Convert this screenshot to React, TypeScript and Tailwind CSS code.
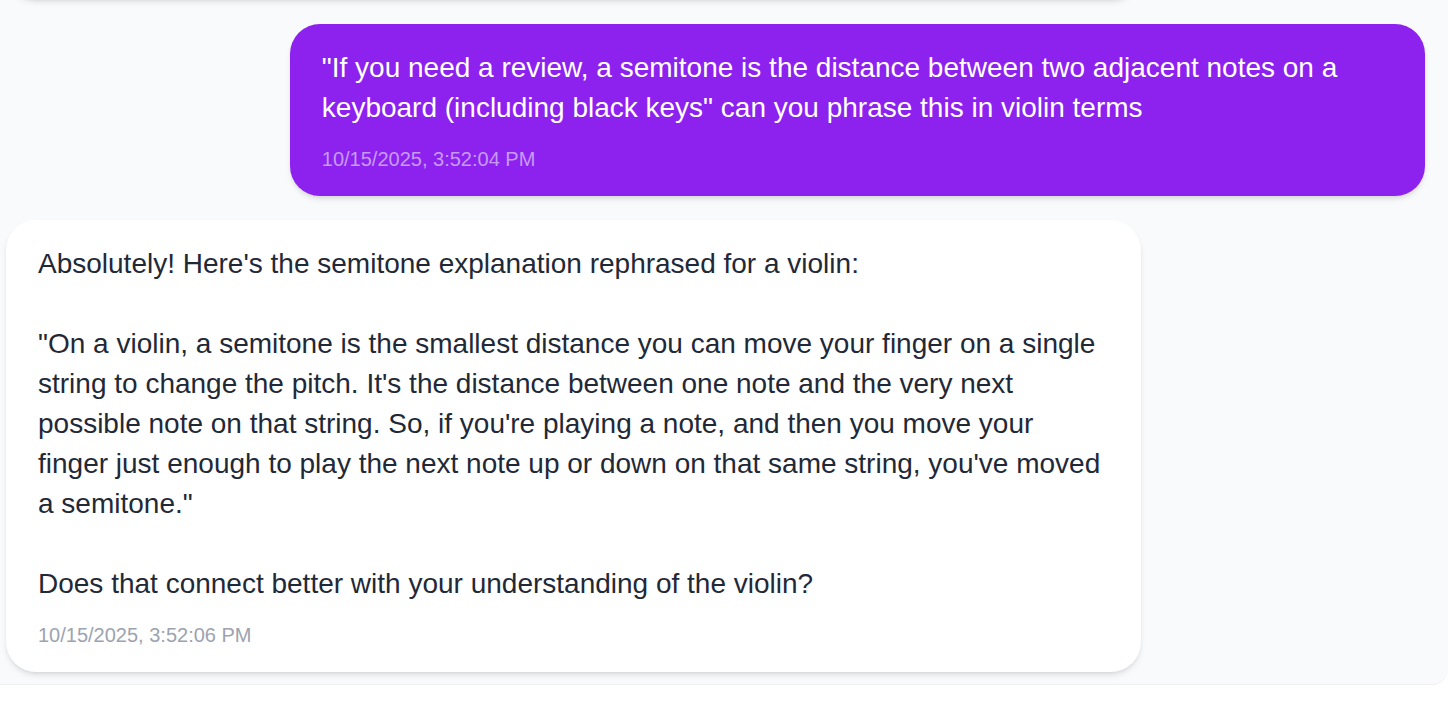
const assistantText = `Absolutely! Here's the semitone explanation rephrased for a violin:

"On a violin, a semitone is the smallest distance you can move your finger on a single string to change the pitch. It's the distance between one note and the very next possible note on that string. So, if you're playing a note, and then you move your finger just enough to play the next note up or down on that same string, you've moved a semitone."

Does that connect better with your understanding of the violin?`

const userText = `"If you need a review, a semitone is the distance between two adjacent notes on a keyboard (including black keys" can you phrase this in violin terms`

interface BubbleProps {
  role: 'user' | 'assistant'
  text: string
  time: string
}

function Bubble({ role, text, time }: BubbleProps) {
  const isUser = role === 'user'
  return (
    <div className={`flex ${isUser ? 'justify-end' : 'justify-start'}`}>
      <div
        className={`max-w-[80%] w-full rounded-[30px] px-8 pt-6 pb-[23px] shadow-md ${
          isUser ? 'bg-[#8d22ef] text-white' : 'bg-white text-[#1f2937]'
        }`}
      >
        <p className="whitespace-pre-wrap text-[28px] leading-[40px]">{text}</p>
        <p
          className={`mt-[17px] text-[20px] leading-[28px] ${
            isUser ? 'text-[#c79af6]' : 'text-[#9ca3af]'
          }`}
        >
          {time}
        </p>
      </div>
    </div>
  )
}

export default function App() {
  return (
    <div className="min-h-screen bg-white font-['Liberation_Sans',Arial,sans-serif]">
      <div className="overflow-hidden rounded-br-2xl border-b border-[#eef0f2] bg-[#f9fafb] pl-[6px] pr-[23px] pb-[12px]">
        <div className="flex justify-start">
          <div className="-mt-[61px] h-[60px] w-full max-w-[80%] rounded-[30px] bg-white shadow-md" />
        </div>
        <div className="mt-6 flex flex-col gap-6">
          <Bubble role="user" text={userText} time="10/15/2025, 3:52:04 PM" />
          <Bubble role="assistant" text={assistantText} time="10/15/2025, 3:52:06 PM" />
        </div>
      </div>
    </div>
  )
}
